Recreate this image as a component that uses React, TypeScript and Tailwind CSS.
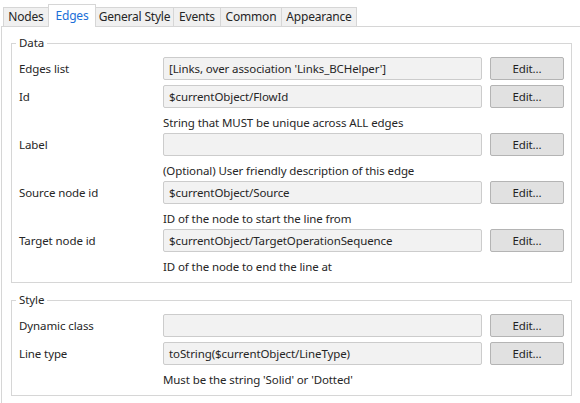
import React from "react";

const tabs = [
  { name: "Nodes", w: "w-[46px]" },
  { name: "Edges", w: "w-[48px]", active: true },
  { name: "General Style", w: "w-[79px]" },
  { name: "Events", w: "w-[48px]" },
  { name: "Common", w: "w-[62px]" },
  { name: "Appearance", w: "w-[76px]" },
];

interface FieldProps {
  label: string;
  value?: string;
  help?: string;
}

const Field: React.FC<FieldProps> = ({ label, value = "", help }) => (
  <>
    <div className="grid grid-cols-[136px_319px_74px] gap-x-2 h-[23px] mb-[5px] items-center">
      <span className="text-[#262626]">{label}</span>
      <div className="h-[23px] bg-[#f2f2f2] border border-[#cccccc] rounded-[2px] pl-[5px] flex items-center text-[#262626] whitespace-nowrap overflow-hidden">
        {value}
      </div>
      <button
        type="button"
        className="h-[23px] bg-[#e1e1e1] border border-[#b4b4b4] rounded-[2px] text-[#1f1f1f] flex items-center justify-center"
      >
        Edit...
      </button>
    </div>
    {help && (
      <div className="h-[20px] pl-[144px] flex items-center text-[#262626]">{help}</div>
    )}
  </>
);

const GroupBox: React.FC<{ title: string; children: React.ReactNode; className?: string }> = ({
  title,
  children,
  className = "",
}) => (
  <div className={`relative border border-[#d6d6d6] pt-[13px] pb-[5px] pl-[7px] pr-[7px] ${className}`}>
    <span className="absolute -top-[10px] left-[4px] bg-white px-[3px] leading-[18px] text-[#262626]">
      {title}
    </span>
    {children}
  </div>
);

export default function App() {
  return (
    <div
      className="w-[580px] h-[403px] overflow-hidden bg-white text-[11.5px] tracking-[-0.1px] leading-none"
      style={{ fontFamily: '"Noto Sans", "Open Sans", sans-serif' }}
    >
      {/* Tab strip */}
      <div className="flex items-end h-[26px] pl-[3px] text-[12px] tracking-[-0.2px]">
        {tabs.map((t, i) =>
          t.active ? (
            <div
              key={t.name}
              className={`${t.w} ${i > 0 ? "-ml-px" : ""} relative z-10 h-[23px] -mb-px bg-white border border-b-0 border-[#d6d6d6] flex items-center justify-center text-[#1a6fd8]`}
            >
              {t.name}
            </div>
          ) : (
            <div
              key={t.name}
              className={`${t.w} ${i > 0 ? "-ml-px" : ""} h-[19px] bg-[#f0f0f0] border border-b-0 border-[#d6d6d6] flex items-center justify-center text-[#262626]`}
            >
              {t.name}
            </div>
          )
        )}
      </div>

      {/* Tab panel */}
      <div className="ml-[1px] w-[600px] h-[400px] border-l border-t border-[#d6d6d6] pt-[16px] pl-[9px]">
        <div className="w-[561px]">
          <GroupBox title="Data">
            <Field label="Edges list" value="[Links, over association 'Links_BCHelper']" />
            <Field label="Id" value="$currentObject/FlowId" help="String that MUST be unique across ALL edges" />
            <Field label="Label" help="(Optional) User friendly description of this edge" />
            <Field label="Source node id" value="$currentObject/Source" help="ID of the node to start the line from" />
            <Field
              label="Target node id"
              value="$currentObject/TargetOperationSequence"
              help="ID of the node to end the line at"
            />
          </GroupBox>

          <GroupBox title="Style" className="mt-[17px]">
            <Field label="Dynamic class" />
            <Field label="Line type" value="toString($currentObject/LineType)" help="Must be the string 'Solid' or 'Dotted'" />
          </GroupBox>
        </div>
      </div>
    </div>
  );
}
